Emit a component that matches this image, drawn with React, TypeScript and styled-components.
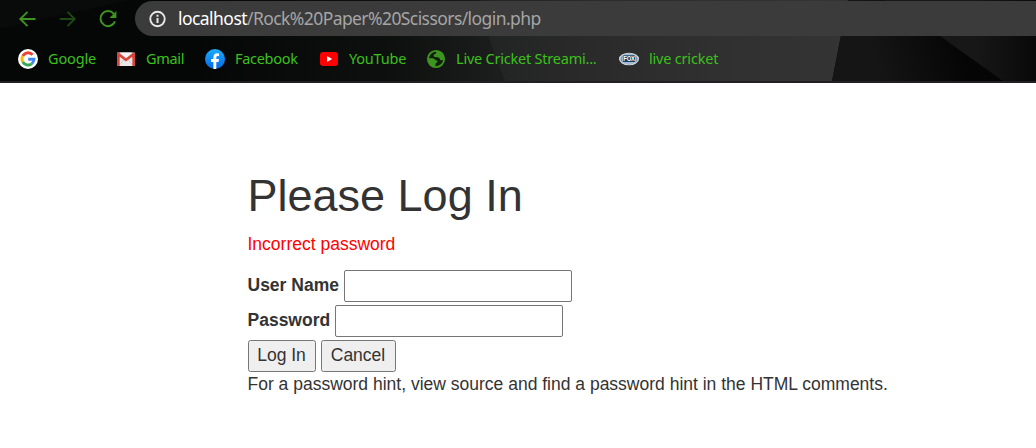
import React from 'react';
import styled, { createGlobalStyle } from 'styled-components';

const GlobalStyle = createGlobalStyle`
  * { box-sizing: border-box; }
  body { margin: 0; background: #fff; overflow: hidden; }
`;

const Window = styled.div`
  height: 448px;
  display: flex;
  flex-direction: column;
  font-family: 'Liberation Sans', Arial, sans-serif;
`;

const Chrome = styled.header`
  position: relative;
  isolation: isolate;
  height: 83px;
  flex: none;
  display: flex;
  flex-direction: column;
  padding-top: 1px;
  border-bottom: 2px solid #211f21;
  background: #050606;
  font-family: 'Noto Sans', 'Open Sans', sans-serif;
`;

const ThemeArt = styled.svg`
  position: absolute;
  inset: 0;
  z-index: -1;
`;

const NavRow = styled.div`
  height: 35px;
  display: flex;
  align-items: center;
  padding-left: 18px;
`;

const NavButtons = styled.nav`
  width: 117px;
  display: flex;
  gap: 21px;
  svg { display: block; }
`;

const AddressBar = styled.div`
  flex: 1;
  height: 35px;
  display: flex;
  align-items: center;
  padding-left: 14px;
  gap: 12px;
  border-radius: 18px 0 0 18px;
  background: #3b3b3b;
`;

const Url = styled.span`
  color: #a5a5a5;
  font-size: 17.5px;
  line-height: 24px;
  letter-spacing: -0.58px;
  white-space: nowrap;
  padding-bottom: 1px;
`;

const Host = styled.span`
  color: #fff;
  letter-spacing: -0.55px;
`;

const Bookmarks = styled.div`
  height: 45px;
  display: flex;
  align-items: center;
  padding-left: 18px;
`;

const Bookmark = styled.div<{ $width: number; $spacing: number }>`
  width: ${p => p.$width}px;
  flex: none;
  display: flex;
  align-items: center;
  gap: 10px;
  color: #3cc01c;
  font-size: 14.5px;
  line-height: 20px;
  letter-spacing: ${p => p.$spacing}px;
  white-space: nowrap;
  svg { flex: none; }
  span { padding-bottom: 2px; }
`;

const Page = styled.main`
  padding: 88px 0 0 247.5px;
  color: #333;
  font-size: 17.5px;
  line-height: 25px;
`;

const Title = styled.h1`
  margin: 0 0 11.5px;
  font-size: 45px;
  font-weight: 400;
  line-height: 49.5px;
`;

const ErrorText = styled.p`
  margin: 0 0 12.5px;
  color: red;
`;

const Field = styled.div`
  display: flex;
  align-items: center;
  gap: 4.9px;
  height: 32px;
  margin-bottom: 3px;
`;

const Label = styled.label`
  font-weight: 700;
`;

const Input = styled.input`
  width: 228px;
  height: 32px;
  padding: 2px;
  border: 1px solid #767676;
  border-radius: 2px;
  background: #fff;
  font: inherit;
  outline: none;
`;

const Actions = styled.div`
  display: flex;
  gap: 5px;
`;

const Button = styled.button<{ $width: number }>`
  width: ${p => p.$width}px;
  height: 32px;
  padding: 0;
  border: 1px solid #767676;
  border-radius: 2.5px;
  background: #efefef;
  color: #333;
  font: inherit;
`;

const Hint = styled.p`
  margin: 0;
  white-space: nowrap;
`;

const BackIcon = () => (
  <svg width="19" height="20" viewBox="0 0 19 20" fill="none" stroke="#3e9420" strokeWidth="1.9">
    <path d="M17.5 10H3M9.5 2.8 2.3 10l7.2 7.2" />
  </svg>
);
const ForwardIcon = () => (
  <svg width="19" height="20" viewBox="0 0 19 20" fill="none" stroke="#1f4913" strokeWidth="1.9">
    <path d="M1.8 10h14.5M9.5 2.8l7.2 7.2-7.2 7.2" />
  </svg>
);
const ReloadIcon = () => (
  <svg width="20" height="20" viewBox="0 0 20 20" fill="none">
    <path d="M15.8 4.8A7.5 7.5 0 1 0 17 12.4" stroke="#3e9420" strokeWidth="2" />
    <path d="M18.4 2v7h-7z" fill="#3e9420" />
  </svg>
);
const InfoIcon = () => (
  <svg width="17" height="18" viewBox="0 0 17 18">
    <circle cx="8.5" cy="9" r="7.2" fill="none" stroke="#e8e8e8" strokeWidth="1.9" />
    <path d="M7.5 4.8h2v2h-2zM7.5 8h2v5h-2z" fill="#e8e8e8" />
  </svg>
);
const GoogleIcon = () => (
  <svg width="20" height="20" viewBox="0 0 20 20">
    <circle cx="10" cy="10" r="10" fill="#fff" />
    <g fill="none" strokeWidth="2.9">
      <path d="M14.6 5.8A6 6 0 0 0 4.8 7" stroke="#ea4335" />
      <path d="M4.8 7a6 6 0 0 0 0 6" stroke="#fbbc05" />
      <path d="M4.8 13a6 6 0 0 0 8.8 1.8" stroke="#34a853" />
      <path d="M13.6 14.8A6 6 0 0 0 16 10.3h-5.8" stroke="#4285f4" />
    </g>
  </svg>
);
const GmailIcon = () => (
  <svg width="20" height="20" viewBox="0 0 20 20">
    <rect x="1" y="3.5" width="18" height="13.5" rx="1" fill="#e9e7e7" />
    <path d="m4 15.5 4.2-5M16 15.5l-4.2-5" stroke="#d0cdcd" />
    <path d="M1 4.5v11.6q0 .9.9.9h1.8V7.8l6.3 4.8 6.3-4.8V17h1.8q.9 0 .9-.9V4.5q0-1-1-1h-.5L10 9.2 2.5 3.5H2q-1 0-1 1z" fill="#d8443a" />
    <path d="M4 3.5h12l-6 5z" fill="#f5f3f3" />
  </svg>
);
const FacebookIcon = () => (
  <svg width="20" height="20" viewBox="0 0 20 20">
    <defs>
      <linearGradient id="fb" x2="0" y2="1">
        <stop stopColor="#19aefc" />
        <stop offset="1" stopColor="#0668e6" />
      </linearGradient>
    </defs>
    <circle cx="10" cy="10" r="10" fill="url(#fb)" />
    <path d="M8.4 20v-7H6v-2.9h2.4V8.2C8.4 5.6 9.9 4.3 12 4.3q1.2 0 2 .2V7h-1.2c-1.2 0-1.5.7-1.5 1.4v1.7H14l-.5 2.9h-2.2v7z" fill="#fff" />
  </svg>
);
const YouTubeIcon = () => (
  <svg width="20" height="20" viewBox="0 0 20 20">
    <rect x="1" y="3" width="18" height="14" rx="3.2" fill="#f00" />
    <path d="m8 7 5.2 3L8 13z" fill="#fff" />
  </svg>
);
const GlobeIcon = () => (
  <svg width="20" height="20" viewBox="0 0 20 20">
    <circle cx="10" cy="10" r="8.1" fill="#10200c" stroke="#3e9420" strokeWidth="1.9" />
    <path d="M9 2.5c1 .1 1.4.9 1.1 1.7-.4 1-2.1 1-2.4 1.9-.3.8.3 1.6 1.2 2 1.4.6 3.6-.1 4.5 1 .5.6.4 1.4 1.1 1.8.9.5 2 .1 3.3.1l.5-3.2-2.2-4.2-3-1.7z" fill="#3e9420" />
    <path d="M2 9.2h4.4c1.5 0 2.1 1 3 1.7.8.6 2 .4 2.1 1.6.1 1-1.2 1.3-1.8 2.1-.5.8-.2 1.8-.2 3L5.8 17 3 13.8z" fill="#3e9420" />
  </svg>
);
const FoxIcon = () => (
  <svg width="20" height="20" viewBox="0 0 20 20">
    <ellipse cx="10" cy="10" rx="10" ry="6.3" fill="#d5dde4" />
    <ellipse cx="10" cy="10" rx="8.7" ry="5.4" fill="#7995ae" />
    <rect x="3.6" y="5.4" width="12.8" height="9.2" rx="3" fill="#d6e3ed" />
    <rect x="4" y="6.2" width="12" height="7" rx="1" fill="#123f68" />
    <text x="10" y="12.2" fill="#fff" fontFamily="Liberation Sans" fontSize="6.6" fontWeight="700" textAnchor="middle" textLength="11.4" lengthAdjust="spacingAndGlyphs">FOX</text>
  </svg>
);

const bookmarks = [
  { label: 'Google', width: 98, spacing: -0.15, Icon: GoogleIcon },
  { label: 'Gmail', width: 89, spacing: -0.3, Icon: GmailIcon },
  { label: 'Facebook', width: 114, spacing: -0.3, Icon: FacebookIcon },
  { label: 'YouTube', width: 107, spacing: -0.2, Icon: YouTubeIcon },
  { label: 'Live Cricket Streami...', width: 193, spacing: -0.22, Icon: GlobeIcon },
  { label: 'live cricket', width: 110, spacing: -0.2, Icon: FoxIcon },
];

export default function App() {
  return (
    <Window>
      <GlobalStyle />
      <Chrome>
        <ThemeArt width="1036" height="81" viewBox="0 0 1036 81">
          <defs>
            <linearGradient id="fade">
              <stop stopColor="#050606" />
              <stop offset="0.3" stopColor="#101211" />
              <stop offset="0.46" stopColor="#232424" />
              <stop offset="0.62" stopColor="#2b2b2b" />
              <stop offset="0.8" stopColor="#303030" />
              <stop offset="1" stopColor="#343434" />
            </linearGradient>
            <linearGradient id="facet" gradientUnits="userSpaceOnUse" x1="880" y1="80" x2="965" y2="58">
              <stop stopColor="#151515" />
              <stop offset="1" stopColor="#050505" />
            </linearGradient>
            <linearGradient id="edge">
              <stop stopColor="#191919" />
              <stop offset="0.6" stopColor="#171717" />
              <stop offset="1" stopColor="#090909" />
            </linearGradient>
          </defs>
          <path d="M0 0H130L0 29z" fill="#080b0a" />
          <path d="M200 0H848L832 81H200z" fill="url(#fade)" />
          <path d="M480 0 488 36 505 81H200V0z" fill="#080a09" opacity=".25" />
          <path d="M848 0H1036V81H832z" fill="url(#facet)" />
          <path d="M885 0H1036V81H1003L940 36z" fill="url(#edge)" />
        </ThemeArt>
        <NavRow>
          <NavButtons>
            <BackIcon />
            <ForwardIcon />
            <ReloadIcon />
          </NavButtons>
          <AddressBar>
            <InfoIcon />
            <Url><Host>localhost</Host>/Rock%20Paper%20Scissors/login.php</Url>
          </AddressBar>
        </NavRow>
        <Bookmarks>
          {bookmarks.map(({ label, width, spacing, Icon }) => (
            <Bookmark key={label} $width={width} $spacing={spacing}>
              <Icon />
              <span>{label}</span>
            </Bookmark>
          ))}
        </Bookmarks>
      </Chrome>
      <Page>
        <Title>Please Log In</Title>
        <ErrorText>Incorrect password</ErrorText>
        <form onSubmit={e => e.preventDefault()}>
          <Field>
            <Label htmlFor="user">User Name</Label>
            <Input id="user" type="text" />
          </Field>
          <Field>
            <Label htmlFor="pass">Password</Label>
            <Input id="pass" type="password" />
          </Field>
          <Actions>
            <Button type="submit" $width={68}>Log In</Button>
            <Button type="button" $width={75}>Cancel</Button>
          </Actions>
        </form>
        <Hint>For a password hint, view source and find a password hint in the HTML comments.</Hint>
      </Page>
    </Window>
  );
}
